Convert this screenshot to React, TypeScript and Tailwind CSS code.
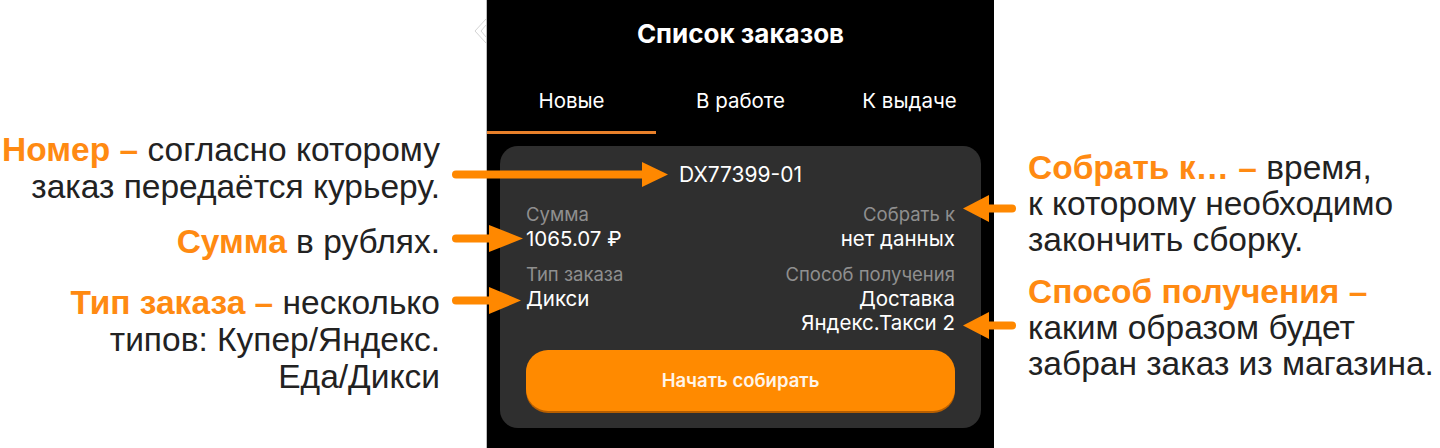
import React from 'react';

const ORANGE = 'text-[#ff8a12]';

// Callout arrows drawn over the phone screen and its side notes
const Arrows: React.FC = () => (
    <svg className="absolute inset-0 pointer-events-none" width="1440" height="448" viewBox="0 0 1440 448">
        <g fill="#ff8800" stroke="#ff8800" strokeLinecap="round">
            <line x1="456" y1="174.5" x2="645" y2="174.5" strokeWidth="8" />
            <polygon points="642,162 668,174.5 642,187" strokeWidth="0" />

            <line x1="456" y1="238.5" x2="492" y2="238.5" strokeWidth="8" />
            <polygon points="489,225 523,238.5 489,252" strokeWidth="0" />

            <line x1="456" y1="300.5" x2="492" y2="300.5" strokeWidth="8" />
            <polygon points="489,287 521,300.5 489,314" strokeWidth="0" />

            <line x1="985" y1="208.5" x2="1012" y2="208.5" strokeWidth="8" />
            <polygon points="989,195 963,208.5 989,222" strokeWidth="0" />

            <line x1="985" y1="325.5" x2="1012" y2="325.5" strokeWidth="8" />
            <polygon points="989,312 963,325.5 989,339" strokeWidth="0" />
        </g>
        {/* faint clipped glyph at the screen edge */}
        <g fill="none" stroke="#d4d4d4" strokeWidth="1">
            <polyline points="486,19 475,31 486,43" />
            <polyline points="486,25 481,31 486,37" />
        </g>
    </svg>
);

const Field: React.FC<{ label: string; value: React.ReactNode; right?: boolean }> = ({ label, value, right }) => (
    <div className={right ? 'text-right' : 'text-left'}>
        <div className="text-[18.5px] leading-[20px] text-[#8f8f8f]">{label}</div>
        <div className="text-[20.5px] leading-[24px] text-white mt-[3px]">{value}</div>
    </div>
);

const OrderCard: React.FC = () => (
    <div className="mx-[13px] mt-[12px] h-[282px] rounded-[18px] bg-[#2f2f2f] px-[26px] pt-[17px] pb-[16px] flex flex-col">
        <div className="text-center text-[21px] leading-[24px] text-white">DX77399-01</div>
        <div className="grid grid-cols-2 mt-[17px]">
            <Field label="Сумма" value="1065.07 ₽" />
            <Field label="Собрать к" value="нет данных" right />
        </div>
        <div className="grid grid-cols-2 mt-[13px]">
            <Field label="Тип заказа" value="Дикси" />
            <Field label="Способ получения" value={<>Доставка<br />Яндекс.Такси 2</>} right />
        </div>
        <button className="mt-[15px] h-[61px] w-full rounded-[22px] bg-[#ff8a00] text-[18.5px] font-semibold text-[#fff4e8] shadow-[0_2px_0_#b85f00]">
            Начать собирать
        </button>
    </div>
);

const PhoneScreen: React.FC = () => {
    const tabs = ['Новые', 'В работе', 'К выдаче'];
    return (
        <div className="w-[508px] h-[448px] bg-black border-l border-[#bdbdbd] flex flex-col" style={{ fontFamily: 'Inter, "Noto Sans", sans-serif' }}>
            <div className="h-[70px] pb-[4px] flex items-center justify-center text-[26px] font-bold text-white">Список заказов</div>
            <div className="grid grid-cols-3 h-[64px]">
                {tabs.map((t, i) => (
                    <div
                        key={t}
                        className={`flex items-center justify-center pt-[2px] text-[20.5px] text-white ${i === 0 ? 'border-b-[3px] border-[#e8802a]' : 'border-b-[3px] border-transparent'}`}
                    >
                        {t}
                    </div>
                ))}
            </div>
            <OrderCard />
        </div>
    );
};

export default function App() {
    return (
        <div className="relative w-[1440px] h-[448px] bg-white flex text-[#222222]" style={{ fontFamily: '"Liberation Sans", Arial, sans-serif' }}>
            {/* left notes */}
            <div className="w-[486px] shrink-0 pr-[46px] text-right text-[33.5px] leading-[37px] whitespace-nowrap pt-[131px]">
                <div>
                    <span className={`${ORANGE} font-bold`}>Номер –</span> согласно которому<br />
                    заказ передаётся курьеру.
                </div>
                <div className="mt-[18px]">
                    <span className={`${ORANGE} font-bold`}>Сумма</span> в рублях.
                </div>
                <div className="mt-[24px]">
                    <span className={`${ORANGE} font-bold`}>Тип заказа –</span> несколько<br />
                    типов: Купер/Яндекс.<br />
                    Еда/Дикси
                </div>
            </div>

            <PhoneScreen />

            {/* right notes */}
            <div className="flex-1 pl-[34px] text-[33.5px] leading-[36px] whitespace-nowrap pt-[150px]">
                <div>
                    <span className={`${ORANGE} font-bold`}>Собрать к… –</span> время,<br />
                    к которому необходимо<br />
                    закончить сборку.
                </div>
                <div className="mt-[16px]">
                    <span className={`${ORANGE} font-bold`}>Способ получения –</span><br />
                    каким образом будет<br />
                    забран заказ из магазина.
                </div>
            </div>

            <Arrows />
        </div>
    );
}
